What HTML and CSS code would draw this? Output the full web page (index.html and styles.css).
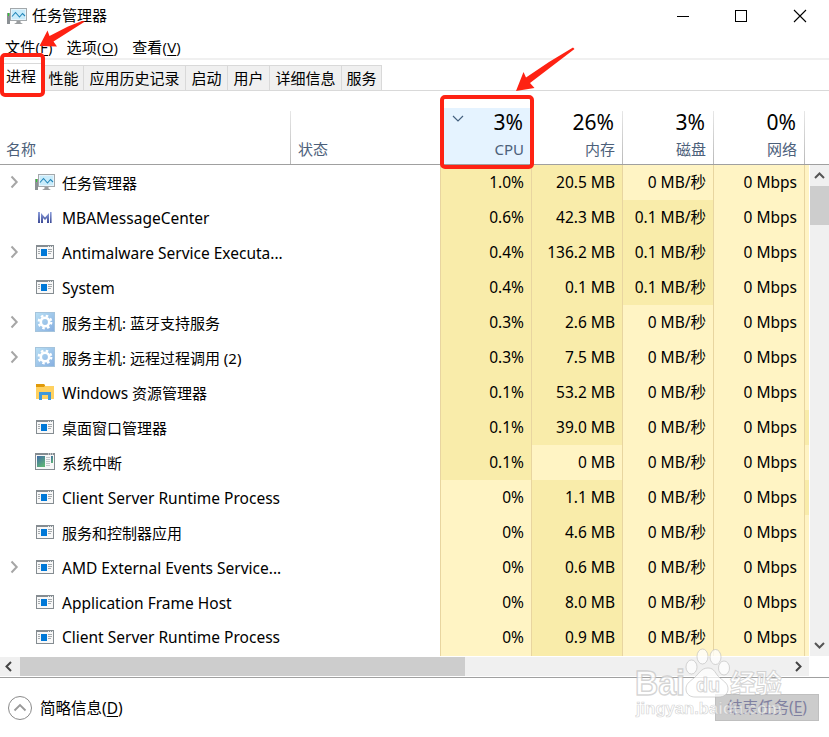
FILE: index.html
```
<!DOCTYPE html>
<html lang="zh-CN">
<head>
    <meta charset="UTF-8">
    <meta name="viewport" content="width=device-width, initial-scale=1.0">
    <title>任务管理器</title>
    <link rel="stylesheet" href="styles.css">
</head>
<body>
    <!-- Shared icons -->
    <svg class="defs" width="0" height="0">
        <defs>
            <linearGradient id="sky" x1="0" y1="0" x2="1" y2="1">
                <stop offset="0" stop-color="#b9e0f5"/>
                <stop offset="1" stop-color="#86aee0"/>
            </linearGradient>
            <linearGradient id="screen" x1="0" y1="0" x2="0.6" y2="1">
                <stop offset="0" stop-color="#3f6aa8"/>
                <stop offset="1" stop-color="#5fb277"/>
            </linearGradient>
            <linearGradient id="mba" x1="0" y1="0" x2="0" y2="1">
                <stop offset="0" stop-color="#8ea0dc"/>
                <stop offset="1" stop-color="#3c4a96"/>
            </linearGradient>
        </defs>
        <symbol id="monitor" viewBox="0 0 20 20">
            <rect x="0" y="7" width="3" height="11" fill="#8b9094"/>
            <rect x="1" y="7" width="1" height="3" fill="#2fd02f"/>
            <rect x="3.5" y="2.5" width="16" height="12" fill="#e4f4fc" stroke="#a3a8ab"/>
            <rect x="5" y="4" width="13" height="9" fill="#c9ecfb"/>
            <path d="M5 10.5 L8.500 6.500 L12.500 11 L15.500 7.500 L18 10" fill="none" stroke="#2487ba" stroke-width="1.1"/>
            <path d="M9.5 15h4v1.5l2.5 1.5h-9l2.5-1.5z" fill="#9a9d9f"/>
        </symbol>
        <symbol id="app" viewBox="0 0 20 20">
            <rect x="1.5" y="3.5" width="17" height="13" fill="#f8f8f8" stroke="#858c91"/>
            <rect x="1" y="3" width="18" height="2" fill="#858c91"/>
            <path d="M13 4.5h1M15 4.5h1M17 4.5h1" stroke="#e5e8ea"/>
            <rect x="6" y="7" width="6" height="7" fill="#0078d7"/>
            <path d="M3 7.5h2M3 9.5h2M3 11.5h2M13 7.5h4M13 9.5h4M13 11.5h3" stroke="#a5aaad"/>
        </symbol>
        <symbol id="gear" viewBox="0 0 20 20">
            <rect x="0.5" y="0.5" width="19" height="19" fill="url(#sky)" stroke="#a5c4dc"/>
            <circle cx="10" cy="10" r="6.3" fill="none" stroke="#fff" stroke-width="2.2" stroke-dasharray="2.5 2.45"/>
            <circle cx="10" cy="10" r="4.2" fill="none" stroke="#fff" stroke-width="2.6"/>
        </symbol>
        <symbol id="folder" viewBox="0 0 20 20">
            <path d="M1 2h8l1 2h9v13H1z" fill="#ffd160"/>
            <path d="M1 2h8l1.200 1.500L9 5H1z" fill="#e09a0a"/>
            <path d="M4 18V10h12v8h-3v-5H7v5z" fill="#3e98dc"/>
        </symbol>
        <symbol id="irq" viewBox="0 0 20 20">
            <rect x="0.500" y="1.500" width="19" height="16" fill="#f7f7f7" stroke="#858c91"/>
            <rect x="1" y="1" width="18" height="2" fill="#858c91"/>
            <path d="M13 2h1M15 2h1M17 2h1" stroke="#fff"/>
            <rect x="2" y="4" width="8" height="11" fill="url(#screen)"/>
            <path d="M11 5.500h4M11 7.500h4M11 9.500h4M11 11.500h4M11 13.500h4" stroke="#c3c7ca"/>
            <rect x="16" y="4" width="2" height="7" fill="url(#screen)"/>
        </symbol>
        <symbol id="mbam" viewBox="0 0 20 20">
            <path d="M3 5h2v11H3zM6 16V6l4 4.500L14 6v10h-2v-5l-2 2-2-2v5zM15 5h1.600v11H15z" fill="url(#mba)"/>
        </symbol>
        <symbol id="chevron" viewBox="0 0 10 14">
            <path d="M2.500 1.500 L7.700 7 L2.500 12.500" fill="none" stroke="#a6a6a6" stroke-width="2"/>
        </symbol>
    </svg>

    <div class="window">
        <div class="titlebar">
            <svg class="title-icon"><use href="#monitor"/></svg>
            <span class="title">任务管理器</span>
            <svg class="controls" width="130" height="14" viewBox="0 0 130 14">
                <path d="M0 7.500h12" stroke="#000"/>
                <rect x="58.500" y="1.500" width="11" height="11" fill="none" stroke="#000"/>
                <path d="M117 1l12 12M129 1l-12 12" stroke="#000" stroke-width="1.100"/>
            </svg>
        </div>
        <div class="menubar">
            <span>文件(<u>F</u>)</span>
            <span>选项(<u>O</u>)</span>
            <span>查看(<u>V</u>)</span>
        </div>
        <div class="tabs">
            <div class="tab active">进程</div>
            <div class="tab w40">性能</div>
            <div class="tab w102">应用历史记录</div>
            <div class="tab w42">启动</div>
            <div class="tab w42">用户</div>
            <div class="tab w72">详细信息</div>
            <div class="tab w40">服务</div>
        </div>

        <div class="head">
            <div class="col name">名称</div>
            <div class="col status">状态</div>
            <div class="col num sorted">
                <svg class="sort" width="12" height="8" viewBox="0 0 12 8"><path d="M1 1l5 5 5-5" fill="none" stroke="#44607f" stroke-width="1.200"/></svg>
                <b>3%</b>CPU
            </div>
            <div class="col num"><b>26%</b>内存</div>
            <div class="col num"><b>3%</b>磁盘</div>
            <div class="col num"><b>0%</b>网络</div>
        </div>

        <div class="body">
            <div class="rows">
                <div class="row">
                    <svg class="exp"><use href="#chevron"/></svg><svg class="ico"><use href="#monitor"/></svg><span class="proc">任务管理器</span>
                    <span class="val hot">1.0%</span><span class="val hot">20.5 MB</span><span class="val">0 MB/秒</span><span class="val">0 Mbps</span><i class="edge"></i>
                </div>
                <div class="row">
                    <i class="exp"></i><svg class="ico"><use href="#mbam"/></svg><span class="proc en">MBAMessageCenter</span>
                    <span class="val hot">0.6%</span><span class="val hot">42.3 MB</span><span class="val hot">0.1 MB/秒</span><span class="val">0 Mbps</span><i class="edge"></i>
                </div>
                <div class="row">
                    <svg class="exp"><use href="#chevron"/></svg><svg class="ico"><use href="#app"/></svg><span class="proc en">Antimalware Service Executa...</span>
                    <span class="val hot">0.4%</span><span class="val hot">136.2 MB</span><span class="val hot">0.1 MB/秒</span><span class="val">0 Mbps</span><i class="edge"></i>
                </div>
                <div class="row">
                    <i class="exp"></i><svg class="ico"><use href="#app"/></svg><span class="proc en">System</span>
                    <span class="val hot">0.4%</span><span class="val hot">0.1 MB</span><span class="val hot">0.1 MB/秒</span><span class="val">0 Mbps</span><i class="edge"></i>
                </div>
                <div class="row">
                    <svg class="exp"><use href="#chevron"/></svg><svg class="ico"><use href="#gear"/></svg><span class="proc">服务主机: 蓝牙支持服务</span>
                    <span class="val hot">0.3%</span><span class="val hot">2.6 MB</span><span class="val">0 MB/秒</span><span class="val">0 Mbps</span><i class="edge"></i>
                </div>
                <div class="row">
                    <svg class="exp"><use href="#chevron"/></svg><svg class="ico"><use href="#gear"/></svg><span class="proc">服务主机: 远程过程调用 (2)</span>
                    <span class="val hot">0.3%</span><span class="val hot">7.5 MB</span><span class="val">0 MB/秒</span><span class="val">0 Mbps</span><i class="edge"></i>
                </div>
                <div class="row">
                    <i class="exp"></i><svg class="ico"><use href="#folder"/></svg><span class="proc"><span class="en">Windows</span> 资源管理器</span>
                    <span class="val hot">0.1%</span><span class="val hot">53.2 MB</span><span class="val">0 MB/秒</span><span class="val">0 Mbps</span><i class="edge"></i>
                </div>
                <div class="row">
                    <i class="exp"></i><svg class="ico"><use href="#app"/></svg><span class="proc">桌面窗口管理器</span>
                    <span class="val hot">0.1%</span><span class="val hot">39.0 MB</span><span class="val">0 MB/秒</span><span class="val">0 Mbps</span><i class="edge hot"></i>
                </div>
                <div class="row">
                    <i class="exp"></i><svg class="ico"><use href="#irq"/></svg><span class="proc">系统中断</span>
                    <span class="val hot">0.1%</span><span class="val">0 MB</span><span class="val">0 MB/秒</span><span class="val">0 Mbps</span><i class="edge"></i>
                </div>
                <div class="row">
                    <i class="exp"></i><svg class="ico"><use href="#app"/></svg><span class="proc en">Client Server Runtime Process</span>
                    <span class="val">0%</span><span class="val hot">1.1 MB</span><span class="val">0 MB/秒</span><span class="val">0 Mbps</span><i class="edge hot"></i>
                </div>
                <div class="row">
                    <i class="exp"></i><svg class="ico"><use href="#app"/></svg><span class="proc">服务和控制器应用</span>
                    <span class="val">0%</span><span class="val hot">4.6 MB</span><span class="val">0 MB/秒</span><span class="val">0 Mbps</span><i class="edge"></i>
                </div>
                <div class="row">
                    <svg class="exp"><use href="#chevron"/></svg><svg class="ico"><use href="#app"/></svg><span class="proc en">AMD External Events Service...</span>
                    <span class="val">0%</span><span class="val hot">0.6 MB</span><span class="val">0 MB/秒</span><span class="val">0 Mbps</span><i class="edge"></i>
                </div>
                <div class="row">
                    <i class="exp"></i><svg class="ico"><use href="#app"/></svg><span class="proc en">Application Frame Host</span>
                    <span class="val">0%</span><span class="val hot">8.0 MB</span><span class="val">0 MB/秒</span><span class="val">0 Mbps</span><i class="edge"></i>
                </div>
                <div class="row last">
                    <i class="exp"></i><svg class="ico"><use href="#app"/></svg><span class="proc en">Client Server Runtime Process</span>
                    <span class="val">0%</span><span class="val hot">0.9 MB</span><span class="val">0 MB/秒</span><span class="val">0 Mbps</span><i class="edge"></i>
                </div>
            </div>
            <div class="vscroll">
                <svg width="19" height="21" viewBox="0 0 19 21"><path d="M5 13l4.500-4.500L14 13" fill="none" stroke="#555" stroke-width="2"/></svg>
                <div class="vthumb"></div>
                <svg class="down" width="19" height="21" viewBox="0 0 19 21"><path d="M5 8l4.500 4.500L14 8" fill="none" stroke="#555" stroke-width="2"/></svg>
            </div>
        </div>
        <div class="hscroll">
            <svg width="20" height="19" viewBox="0 0 20 19"><path d="M11 5L6.500 9.500L11 14" fill="none" stroke="#444" stroke-width="2"/></svg>
            <div class="hthumb"></div>
            <svg class="right" width="20" height="19" viewBox="0 0 20 19"><path d="M7 5l4.500 4.500L7 14" fill="none" stroke="#444" stroke-width="2"/></svg>
        </div>

        <div class="footer">
            <svg width="26" height="26" viewBox="0 0 26 26">
                <circle cx="13" cy="13" r="11.500" fill="#fff" stroke="#8a8a8a"/>
                <path d="M7.500 15.500L13 10l5.500 5.500" fill="none" stroke="#999" stroke-width="1.800"/>
            </svg>
            <span class="less">简略信息(<u>D</u>)</span>
            <button class="end-task" disabled>结束任务(<u>E</u>)</button>
        </div>
    </div>

    <!-- Red callouts -->
    <div class="mark mark-tab"></div>
    <div class="mark mark-cpu"></div>
    <svg class="overlay" width="829" height="737" viewBox="0 0 829 737">
        <path d="M39.500 46L47.500 30.500L49.500 36L68 26.500L82 21L85 21.500L53.500 41.500L57 46.500z" fill="#fe2213"/>
        <path d="M516 91L523.500 72L526 77.500L549 62L573 47.500L574.500 49L549 68.500L530 83L534.500 88z" fill="#fe2213"/>
        <!-- Watermark -->
        <g class="watermark">
            <ellipse cx="691.500" cy="667" rx="5.500" ry="7"/>
            <ellipse cx="702.500" cy="656.500" rx="5.500" ry="7.500"/>
            <ellipse cx="715.500" cy="657" rx="5.500" ry="7.500"/>
            <ellipse cx="724" cy="668" rx="5.500" ry="7"/>
            <path d="M708 668c-7 0-9 6-14 10c-5 4-8 6-8 11c0 6 5 8 9 8h24c5 0 9-3 9-8c0-5-3-7-8-11c-5-4-5-10-12-10z"/>
            <text x="635" y="695" class="wm-bai" textLength="50" lengthAdjust="spacingAndGlyphs">Bai</text>
            <text x="696" y="692" class="wm-du" textLength="24" lengthAdjust="spacingAndGlyphs">du</text>
            <text x="730" y="693" class="wm-cn" textLength="52" lengthAdjust="spacingAndGlyphs">经验</text>
            <text x="636" y="714" class="wm-url" textLength="146" lengthAdjust="spacingAndGlyphs">jingyan.baidu.com</text>
        </g>
    </svg>
</body>
</html>
```

FILE: styles.css
```
* {
    box-sizing: border-box;
}
body {
    margin: 0;
    width: 829px;
    height: 737px;
    overflow: hidden;
    background-color: white;
    color: black;
    font-family: "Noto Sans", "Noto Sans CJK SC", sans-serif;
    font-size: 15px;
}
.defs {
    position: absolute;
}
.window {
    display: flex;
    flex-direction: column;
    height: 737px;
}
u {
    text-underline-offset: 2px;
    text-decoration-thickness: 1px;
}

/* title and menu */
.titlebar {
    display: flex;
    align-items: center;
    height: 34px;
    padding: 0 22px 2px 7px;
}
.title {
    line-height: 20px;
    padding-bottom: 2px;
}
.title-icon {
    width: 20px;
    height: 20px;
    margin-right: 5px;
}
.controls {
    margin-left: auto;
}
.menubar {
    display: flex;
    gap: 14px;
    height: 26px;
    padding-left: 5px;
    line-height: 27px;
    border-bottom: 2px solid #f0f0f0;
    font-family: "Open Sans", "Noto Sans CJK SC", sans-serif;
    font-size: 15px;
    letter-spacing: 0.2px;
}

/* tabs */
.tabs {
    display: flex;
    align-items: flex-end;
    height: 31px;
    border-bottom: 1px solid #d9d9d9;
    white-space: nowrap;
}
.tab {
    height: 25px;
    line-height: 25px;
    text-align: center;
    background-color: #f0f0f0;
    border-top: 1px solid #d9d9d9;
    border-right: 1px solid #d9d9d9;
}
.tab.active {
    width: 44px;
    height: 28px;
    padding-right: 1px;
    margin-bottom: -1px;
    background-color: white;
}
.w40 {
    width: 40px;
}
.w42 {
    width: 42px;
}
.w72 {
    width: 72px;
}
.w102 {
    width: 102px;
}

/* column headers */
.head {
    display: flex;
    align-items: flex-end;
    height: 74px;
    border-bottom: 1px solid #a0a0a0;
    color: #4c607a;
}
.col {
    display: flex;
    flex-direction: column;
    justify-content: flex-end;
    height: 53px;
    padding-bottom: 4px;
    line-height: 22px;
    border-right: 1px solid;
    border-image: linear-gradient(#e8e8e8, #b8b8b8) 1;
}
.name {
    width: 291px;
    padding-left: 6px;
}
.status {
    width: 150px;
    padding-left: 7px;
    border-right: 0;
}
.num {
    position: relative;
    width: 91px;
    padding-right: 7px;
    text-align: right;
}
.num b {
    padding-right: 1px;
    font-size: 21px;
    font-weight: normal;
    line-height: 32px;
    color: black;
}
.sorted {
    height: 56px;
    background-color: #e5f3ff;
}
.sort {
    position: absolute;
    left: 11px;
    top: 7px;
}

/* process list */
.body {
    display: flex;
    height: 491px;
}
.rows {
    width: 810px;
}
.row {
    display: flex;
    align-items: center;
    height: 35px;
    line-height: 34px;
    white-space: nowrap;
}
.row.last {
    height: 36px;
    align-items: flex-start;
}
.exp {
    width: 10px;
    height: 14px;
    margin: 0 16px 2px 9px;
}
.ico {
    width: 20px;
    height: 20px;
    margin-bottom: 1px;
}
.last .ico {
    margin-top: 7px;
}
.proc {
    width: 385px;
    padding-left: 7px;
}
.en {
    font-size: 15.5px;
}
.val {
    align-self: stretch;
    width: 91px;
    padding-right: 7px;
    text-align: right;
    font-size: 15.5px;
    background-color: #fff4c4;
    border-left: 1px solid #e8d5a0;
}
.edge {
    align-self: stretch;
    width: 5px;
    background-color: #fff4c4;
    border-left: 1px solid #e8d5a0;
}
.hot {
    background-color: #f9ecaa;
}

/* scrollbars */
.vscroll {
    display: flex;
    flex-direction: column;
    width: 19px;
    background-color: #f0f0f0;
}
.vthumb {
    height: 39px;
    background-color: #cdcdcd;
}
.down {
    margin-top: auto;
}
.hscroll {
    display: flex;
    width: 809px;
    height: 19px;
    margin-top: 1px;
    background-color: #f0f0f0;
}
.hthumb {
    width: 445px;
    background-color: #cdcdcd;
}
.right {
    margin-left: auto;
}

/* footer */
.footer {
    display: flex;
    align-items: center;
    height: 60px;
    margin-top: 1px;
    padding: 0 10px 0 7px;
    border-top: 1px solid #a0a0a0;
}
.less {
    margin-left: 7px;
    font-size: 15.5px;
}
.end-task {
    width: 104px;
    height: 27px;
    margin-left: auto;
    padding: 0 0 2px;
    border: 1px solid #bfbfbf;
    background-color: #ccc;
    color: #7f80a0;
    font-family: inherit;
    font-size: 15.5px;
}

/* things lying over the window */
.mark {
    position: absolute;
    border: 4px solid #fe2213;
    border-radius: 5px;
}
.mark-tab {
    left: 0;
    top: 53px;
    width: 45px;
    height: 44px;
}
.mark-cpu {
    left: 440px;
    top: 95px;
    width: 94px;
    height: 74px;
}
.overlay {
    position: absolute;
    left: 0;
    top: 0;
    pointer-events: none;
}
.watermark {
    fill: rgba(255, 255, 255, 0.75);
    stroke: rgba(185, 185, 185, 0.6);
    stroke-width: 1px;
    font-family: "Liberation Sans", "Noto Sans CJK SC", sans-serif;
}
.wm-bai {
    font-size: 35px;
    font-weight: bold;
    stroke-width: 1.5px;
}
.wm-du {
    font-size: 20px;
    font-weight: bold;
}
.wm-cn {
    font-size: 26px;
    font-weight: bold;
}
.wm-url {
    font-size: 17px;
    font-weight: bold;
    fill: rgba(255, 255, 255, 0.6);
    stroke-width: 0.7px;
}
```
